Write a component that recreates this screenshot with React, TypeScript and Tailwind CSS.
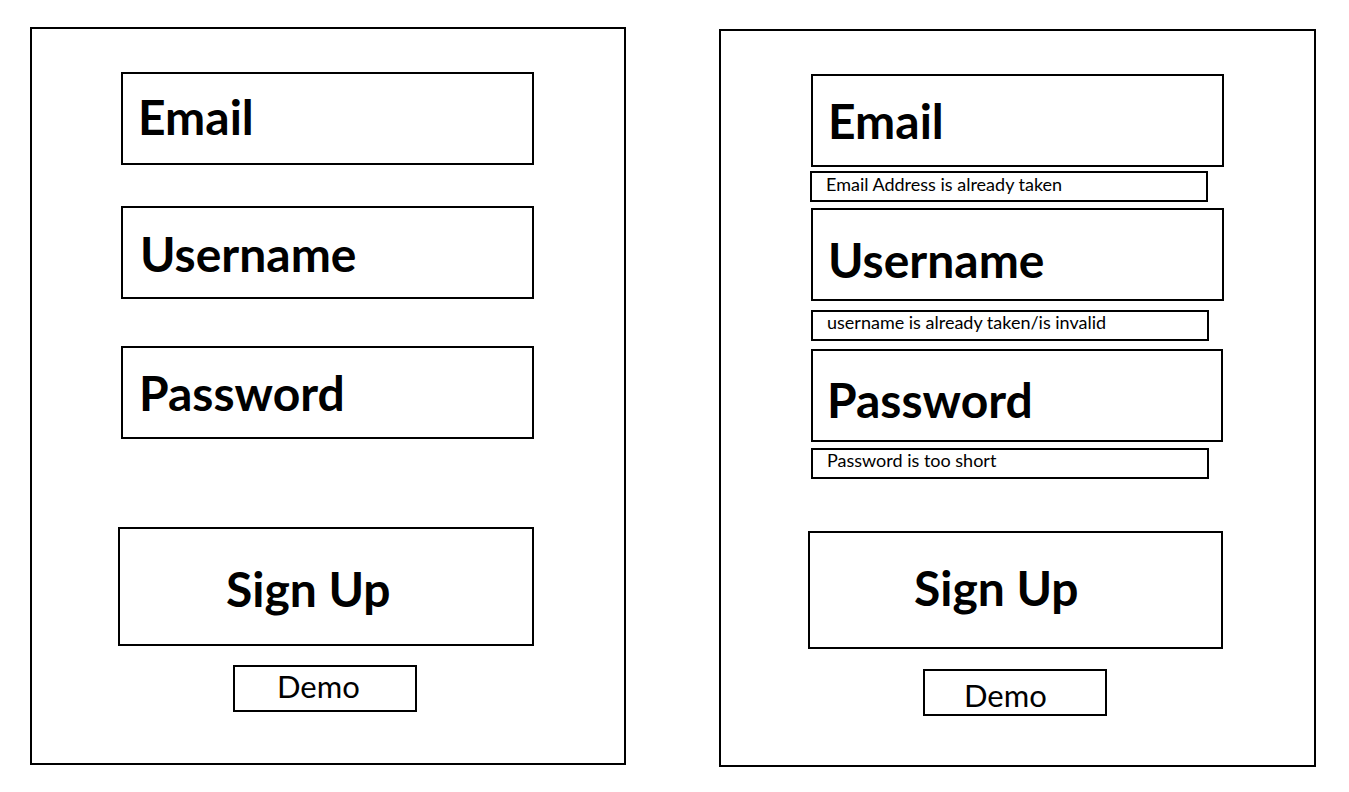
import React from "react";

export default function App() {
  return (
    <div className="w-[1349px] h-[792px] bg-white flex flex-row items-start text-black font-['Lato',sans-serif]">
      {/* Left panel */}
      <div className="ml-[30px] mt-[27px] w-[596px] h-[738px] border-2 border-black flex flex-col items-start shrink-0">
        <div className="ml-[89px] mt-[43px] w-[413px] h-[93px] border-2 border-black pl-[15px] pt-[19px] text-[48px] leading-none font-bold">
          Email
        </div>
        <div className="ml-[89px] mt-[41px] w-[413px] h-[93px] border-2 border-black pl-[17px] pt-[22px] text-[48px] leading-none font-bold">
          Username
        </div>
        <div className="ml-[89px] mt-[47px] w-[413px] h-[93px] border-2 border-black pl-[16px] pt-[21px] text-[48px] leading-none font-bold">
          Password
        </div>
        <div className="ml-[86px] mt-[88px] w-[416px] h-[119px] border-2 border-black pl-[106px] pt-[36px] text-[48px] leading-none font-bold">
          Sign Up
        </div>
        <div className="ml-[201px] mt-[19px] w-[184px] h-[47px] border-2 border-black pl-[42px] pt-[4px] text-[31px] leading-none">
          Demo
        </div>
      </div>

      {/* Right panel */}
      <div className="ml-[93px] mt-[29px] w-[597px] h-[738px] border-2 border-black flex flex-col items-start shrink-0">
        <div className="ml-[90px] mt-[43px] w-[413px] h-[93px] border-2 border-black pl-[15px] pt-[21px] text-[48px] leading-none font-bold">
          Email
        </div>
        <div className="ml-[89px] mt-[4px] w-[398px] h-[31px] border-2 border-black pl-[14px] pt-[2px] text-[18px] leading-none">
          Email Address is already taken
        </div>
        <div className="ml-[90px] mt-[6px] w-[413px] h-[93px] border-2 border-black pl-[15px] pt-[26px] text-[48px] leading-none font-bold">
          Username
        </div>
        <div className="ml-[90px] mt-[9px] w-[398px] h-[31px] border-2 border-black pl-[14px] pt-[1px] text-[18px] leading-none">
          username is already taken/is invalid
        </div>
        <div className="ml-[90px] mt-[8px] w-[412px] h-[93px] border-2 border-black pl-[14px] pt-[25px] text-[48px] leading-none font-bold">
          Password
        </div>
        <div className="ml-[90px] mt-[6px] w-[398px] h-[31px] border-2 border-black pl-[14px] pt-[1px] text-[18px] leading-none">
          Password is too short
        </div>
        <div className="ml-[87px] mt-[52px] w-[415px] h-[118px] border-2 border-black pl-[104px] pt-[31px] text-[48px] leading-none font-bold">
          Sign Up
        </div>
        <div className="ml-[202px] mt-[20px] w-[184px] h-[47px] border-2 border-black pl-[39px] pt-[9px] text-[31px] leading-none">
          Demo
        </div>
      </div>
    </div>
  );
}
